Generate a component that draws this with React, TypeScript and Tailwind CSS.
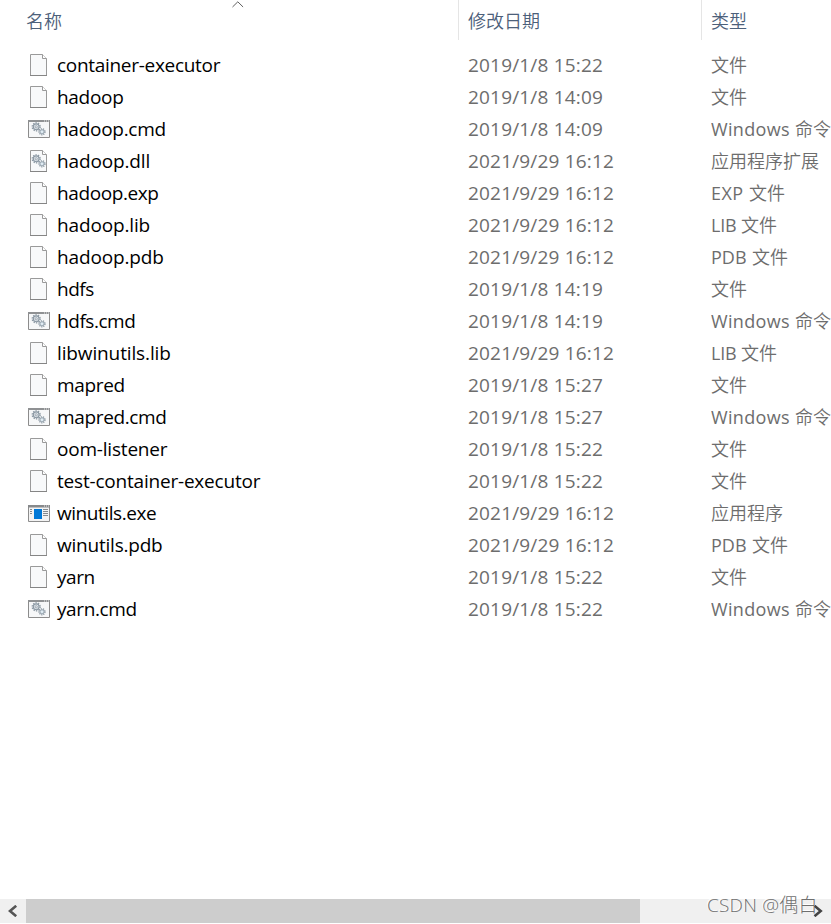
import React from "react";
import clsx from "clsx";

type Kind = "file" | "cmd" | "dll" | "exe";

interface Entry {
  name: string;
  date: string;
  prefix?: string;
  type: string;
  kind: Kind;
  spacing: string;
}

const entries: Entry[] = [
  { name: "container-executor", date: "2019/1/8 15:22", type: "文件", kind: "file", spacing: "tracking-[-0.3px]" },
  { name: "hadoop", date: "2019/1/8 14:09", type: "文件", kind: "file", spacing: "tracking-[-0.3px]" },
  { name: "hadoop.cmd", date: "2019/1/8 14:09", prefix: "Windows", type: "命令", kind: "cmd", spacing: "tracking-[-0.28px]" },
  { name: "hadoop.dll", date: "2021/9/29 16:12", type: "应用程序扩展", kind: "dll", spacing: "tracking-[-0.15px]" },
  { name: "hadoop.exp", date: "2021/9/29 16:12", prefix: "EXP", type: "文件", kind: "file", spacing: "tracking-[-0.4px]" },
  { name: "hadoop.lib", date: "2021/9/29 16:12", prefix: "LIB", type: "文件", kind: "file", spacing: "tracking-[-0.15px]" },
  { name: "hadoop.pdb", date: "2021/9/29 16:12", prefix: "PDB", type: "文件", kind: "file", spacing: "tracking-[-0.15px]" },
  { name: "hdfs", date: "2019/1/8 14:19", type: "文件", kind: "file", spacing: "tracking-[-0.5px]" },
  { name: "hdfs.cmd", date: "2019/1/8 14:19", prefix: "Windows", type: "命令", kind: "cmd", spacing: "tracking-[-0.45px]" },
  { name: "libwinutils.lib", date: "2021/9/29 16:12", prefix: "LIB", type: "文件", kind: "file", spacing: "tracking-[-0.13px]" },
  { name: "mapred", date: "2019/1/8 15:27", type: "文件", kind: "file", spacing: "tracking-[-0.35px]" },
  { name: "mapred.cmd", date: "2019/1/8 15:27", prefix: "Windows", type: "命令", kind: "cmd", spacing: "tracking-[-0.35px]" },
  { name: "oom-listener", date: "2019/1/8 15:22", type: "文件", kind: "file", spacing: "tracking-[-0.2px]" },
  { name: "test-container-executor", date: "2019/1/8 15:22", type: "文件", kind: "file", spacing: "tracking-[-0.2px]" },
  { name: "winutils.exe", date: "2021/9/29 16:12", type: "应用程序", kind: "exe", spacing: "tracking-[-0.45px]" },
  { name: "winutils.pdb", date: "2021/9/29 16:12", prefix: "PDB", type: "文件", kind: "file", spacing: "tracking-[-0.22px]" },
  { name: "yarn", date: "2019/1/8 15:22", type: "文件", kind: "file", spacing: "tracking-[-0.45px]" },
  { name: "yarn.cmd", date: "2019/1/8 15:22", prefix: "Windows", type: "命令", kind: "cmd", spacing: "tracking-[-0.4px]" },
];

// Latin runs are sized apart from the Chinese text that follows them
const prefixClass: Record<string, string> = {
  Windows: "w-[84px] tracking-[0.35px]",
  EXP: "w-[38px] tracking-[0.4px]",
  LIB: "w-[30px] tracking-[-0.2px]",
  PDB: "w-[41px]",
};

const Gears = () => (
  <g fill="none" stroke="#8b98a3">
    <circle cx="8.2" cy="8.8" r="4" strokeWidth="1.3" strokeDasharray="1.4 1.11" />
    <circle cx="8.2" cy="8.8" r="2.9" fill="#dfe5ea" strokeWidth="1.1" />
    <circle cx="8.2" cy="8.8" r="1.1" fill="#fff" strokeWidth="0.8" />
    <circle cx="14" cy="13.8" r="3" strokeWidth="1.3" strokeDasharray="1.2 0.9" />
    <circle cx="14" cy="13.8" r="2.1" fill="#d5e4ee" strokeWidth="0.9" />
    <circle cx="14" cy="13.8" r="0.6" fill="#fff" stroke="none" />
  </g>
);

const FileIcon = ({ kind }: { kind: Kind }) => {
  if (kind === "file" || kind === "dll") {
    return (
      <svg width="22" height="22" viewBox="0 0 22 22" className="shrink-0">
        <path d="M2.5 .5H14.5L18.5 4.5V21.5H2.5Z" fill="#f8f9fa" stroke="#9a9a9a" />
        <path d="M2 21.5H19" stroke="#858585" />
        <path d="M14.5 .5V4.5H18.5" fill="#fff" stroke="#9a9a9a" />
        {kind === "dll" && <Gears />}
      </svg>
    );
  }
  if (kind === "cmd") {
    return (
      <svg width="22" height="22" viewBox="0 0 22 22" className="shrink-0">
        <path d="M.5 3V19.5H21.5V3" fill="#f6f7f8" stroke="#8c8c8c" />
        <path d="M0 2H22V4H0Z" fill="#8f9193" />
        <path d="M16 3H17M18 3H19M20 3H21" stroke="#e8e8e8" />
        <Gears />
      </svg>
    );
  }
  return (
    <svg width="22" height="22" viewBox="0 0 22 22" className="shrink-0">
      <path d="M.5 4V19.5H21.5V4" fill="#f3f3f3" stroke="#8c8c8c" />
      <path d="M0 3H22V5.5H0Z" fill="#87898b" />
      <path d="M16 4H17M18 4H19M20 4H21" stroke="#e8e8e8" />
      <path d="M6 7H14V17H6Z" fill="#0078d7" />
      <path d="M2 7.5H4M2 9.5H4M2 11.5H4M15 7.5H20M15 9.5H20M15 11.5H20M15 13.5H20" stroke="#858a8e" />
    </svg>
  );
};

const headClass = "h-10 pt-[5px] leading-[32px] text-[#4c607a] font-[350]";

const App = () => {
  return (
    <div className="relative flex h-[924px] w-[831px] flex-col overflow-hidden bg-white font-['Open_Sans','Noto_Sans_CJK_SC',sans-serif] text-[18px] whitespace-nowrap">
      {/* Column headings */}
      <div className="flex h-[49px] shrink-0">
        <div className={clsx(headClass, "w-[458px] pl-[26px]")}>名称</div>
        <div className={clsx(headClass, "w-[243px] border-l border-[#e5e5e5] pl-[9px]")}>修改日期</div>
        <div className={clsx(headClass, "w-[130px] border-l border-[#e5e5e5] pl-[9px]")}>类型</div>
      </div>
      {/* Sort arrow over the name heading */}
      <svg width="12" height="7" viewBox="0 0 12 7" className="absolute top-[1px] left-[232px]">
        <path d="M.5 6L5.8 .8L11.1 6" fill="none" stroke="#5f5f5f" />
      </svg>

      <div className="flex-1">
        {entries.map((entry) => (
          <div key={entry.name} className="flex h-8 items-center leading-8">
            <div className="flex w-[468px] items-center gap-[7px] pl-[28px]">
              <FileIcon kind={entry.kind} />
              <span className={clsx("text-[19px] text-black", entry.spacing)}>{entry.name}</span>
            </div>
            <div className="w-[243px] text-[19px] tracking-[0.18px] text-[#6d6d6d]">{entry.date}</div>
            <div className="flex w-[120px] overflow-hidden font-[350] text-[#6d6d6d]">
              {entry.prefix && (
                <span className={clsx("shrink-0 font-normal", prefixClass[entry.prefix])}>{entry.prefix}</span>
              )}
              <span>{entry.type}</span>
            </div>
          </div>
        ))}
      </div>

      {/* Horizontal scrollbar */}
      <div className="mb-px flex h-6 shrink-0 items-center bg-[#f0f0f0]">
        <div className="flex w-[26px] justify-center">
          <svg width="10" height="12" viewBox="0 0 10 12">
            <path d="M8.2 .8L2 6L8.2 11.2" fill="none" stroke="#555" strokeWidth="2.6" />
          </svg>
        </div>
        <div className="h-full w-[614px] bg-[#cdcdcd]" />
        <svg width="10" height="12" viewBox="0 0 10 12" className="ml-[173px]">
          <path d="M1.5 .8L7.7 6L1.5 11.2" fill="none" stroke="#444" strokeWidth="2.6" />
        </svg>
      </div>
      <div className="absolute top-[891px] left-[707px] text-[19px] leading-7 font-light tracking-[0.2px] text-[#6f6f6f] [text-shadow:-1px_-1px_0_#fff]">
        CSDN @偶白
      </div>
    </div>
  );
};

export default App;
